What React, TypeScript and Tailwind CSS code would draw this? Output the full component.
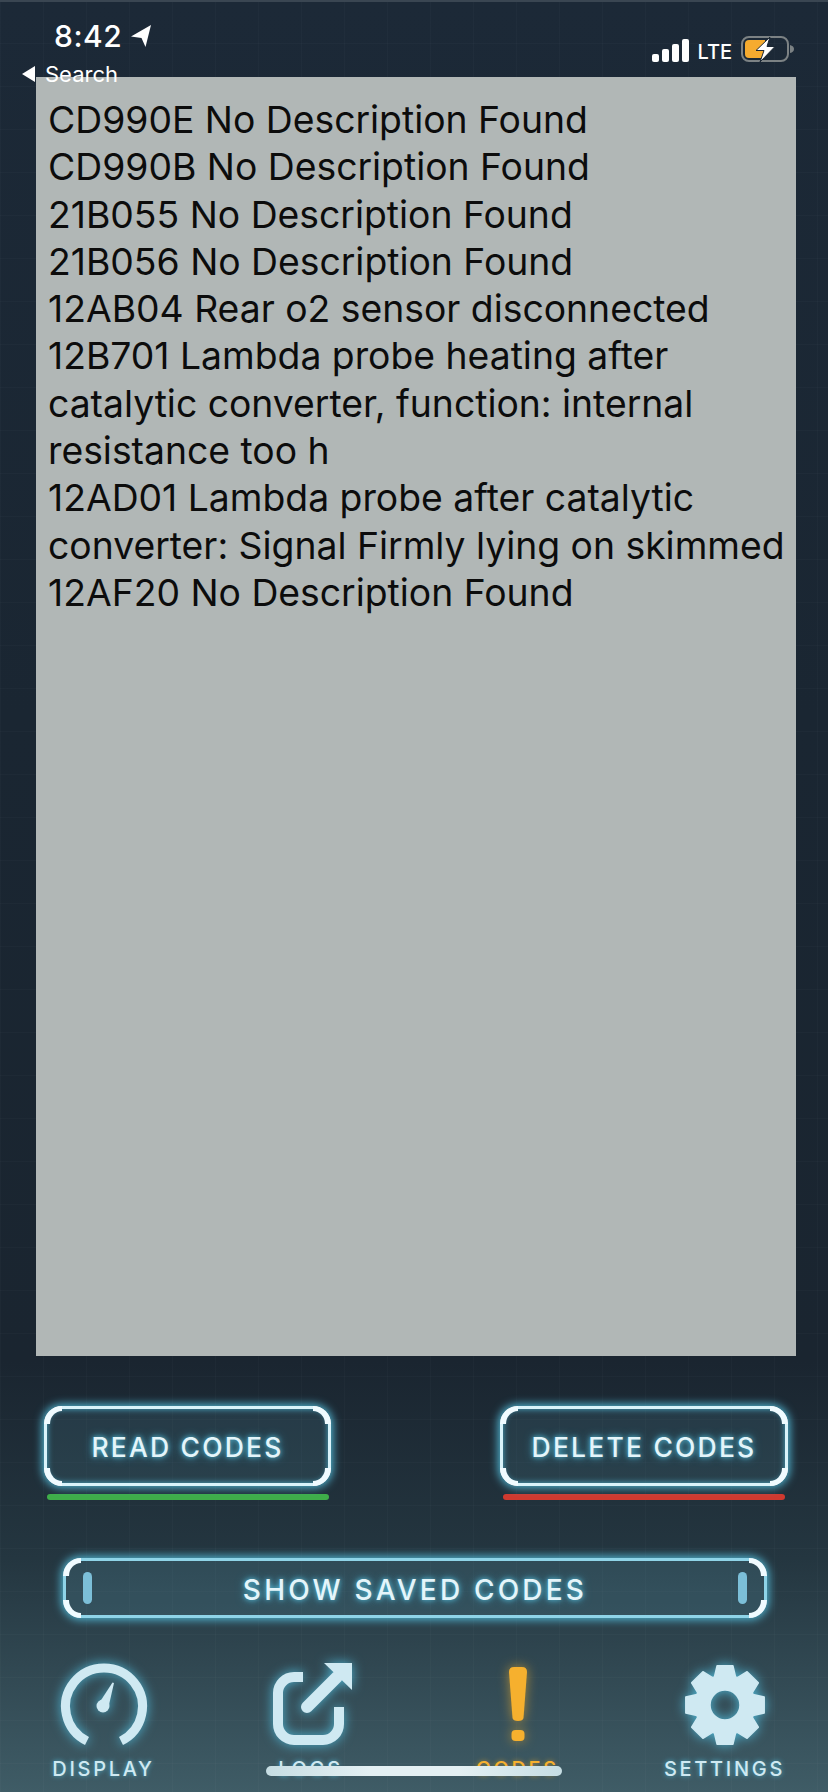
import React from 'react'

const lines = [
  'CD990E No Description Found',
  'CD990B No Description Found',
  '21B055 No Description Found',
  '21B056 No Description Found',
  '12AB04 Rear o2 sensor disconnected',
  '12B701 Lambda probe heating after',
  'catalytic converter, function: internal',
  'resistance too h',
  '12AD01 Lambda probe after catalytic',
  'converter: Signal Firmly lying on skimmed',
  '12AF20 No Description Found',
]

const glowText = 'text-[#e4f5fa] [text-shadow:0_0_5px_#58bcd8,0_0_10px_#3d9bb8]'
const corner = 'absolute w-[18px] h-[18px] border-[#f0fbff]'

function Corners() {
  return (
    <>
      <div className={`${corner} -top-[3px] -left-[3px] border-t-[5px] border-l-[6px] rounded-tl-[18px]`}></div>
      <div className={`${corner} -top-[3px] -right-[3px] border-t-[5px] border-r-[6px] rounded-tr-[18px]`}></div>
      <div className={`${corner} -bottom-[3px] -left-[3px] border-b-[5px] border-l-[6px] rounded-bl-[18px]`}></div>
      <div className={`${corner} -bottom-[3px] -right-[3px] border-b-[5px] border-r-[6px] rounded-br-[18px]`}></div>
    </>
  )
}

function ActionButton({ label, line, width }: { label: string; line: string; width: string }) {
  return (
    <div className={`flex flex-col items-center ${width}`}>
      <div className="relative w-full h-[80px] rounded-[18px] border-[3px] border-[#d9f3fa] bg-[#5f9fb4]/15 shadow-[0_0_8px_2px_#4fb0cc,inset_0_0_6px_#4fb0cc] flex items-center justify-center">
        <Corners />
        <span className={`pt-[4px] text-[26.5px] font-medium tracking-[2.2px] ${glowText}`}>{label}</span>
      </div>
      <div className={`mt-[8px] h-[6px] w-[282px] rounded-full ${line}`}></div>
    </div>
  )
}

function gearPath() {
  const cx = 50
  const cy = 50
  const outer = 40
  const body = 30
  const hole = 15
  const pt = (r: number, a: number) => `${(cx + r * Math.cos(a)).toFixed(2)} ${(cy + r * Math.sin(a)).toFixed(2)}`
  let d = ''
  for (let i = 0; i < 8; i++) {
    const a = (i * Math.PI) / 4 - Math.PI / 2
    d += `${i === 0 ? 'M' : 'L'}${pt(body, a - 0.36)} L${pt(outer, a - 0.2)} L${pt(outer, a + 0.2)} L${pt(body, a + 0.36)} `
  }
  d += `Z M${cx - hole} ${cy} a${hole} ${hole} 0 1 0 ${hole * 2} 0 a${hole} ${hole} 0 1 0 ${-hole * 2} 0 Z`
  return d
}

const iconGlow = 'drop-shadow-[0_0_6px_#4fb4d2]'

function DisplayIcon() {
  return (
    <svg width="100" height="100" viewBox="0 0 100 100" className={iconGlow}>
      <path d="M33 86 A38.5 38.5 0 1 1 67 86" fill="none" stroke="#cfe9f2" strokeWidth="9" />
      <circle cx="49" cy="51" r="6.5" fill="#cfe9f2" />
      <path d="M44.5 49 L58.5 27.5 L60 28 L54.5 52 Z" fill="#cfe9f2" />
    </svg>
  )
}

function LogsIcon() {
  return (
    <svg width="100" height="100" viewBox="0 0 100 100" className={iconGlow}>
      <path
        d="M42 22 H33 A16 16 0 0 0 17 38 V69 A16 16 0 0 0 33 85 H62 A16 16 0 0 0 78 69 V52"
        fill="none"
        stroke="#cfe9f2"
        strokeWidth="10"
      />
      <path d="M46 52 L76 22" fill="none" stroke="#cfe9f2" strokeWidth="12" strokeLinecap="round" />
      <path d="M63 8 L91 8 L91 35 Z" fill="#cfe9f2" />
    </svg>
  )
}

function CodesIcon() {
  return (
    <svg width="100" height="100" viewBox="0 0 100 100" className="drop-shadow-[0_0_6px_#a98a3c]">
      <path d="M41 17 Q41 12 46 12 H54 Q59 12 59 17 L55.5 63 Q55 66 50 66 Q45 66 44.5 63 Z" fill="#f6b02e" />
      <rect x="43.5" y="75" width="13" height="11" rx="4" fill="#f6b02e" />
    </svg>
  )
}

function SettingsIcon() {
  return (
    <svg width="100" height="100" viewBox="0 0 100 100" className={iconGlow}>
      <path d={gearPath()} fill="#cfe9f2" fillRule="evenodd" stroke="#cfe9f2" strokeWidth="1.5" strokeLinejoin="round" />
    </svg>
  )
}

function Tab({ label, icon, active }: { label: string; icon: React.ReactNode; active?: boolean }) {
  return (
    <div className="flex flex-col items-center">
      <div className="h-[100px] -mt-[5px]">{icon}</div>
      <span
        className={`mt-[2px] text-[20px] leading-[24px] font-medium tracking-[2.7px] ${
          active ? 'text-[#f6b02e] [text-shadow:0_0_5px_#a98a3c]' : 'text-[#cfe9f2] [text-shadow:0_0_5px_#4fb4d2]'
        }`}
      >
        {label}
      </span>
    </div>
  )
}

export default function App() {
  return (
    <div className="relative w-[828px] h-[1792px] overflow-hidden flex flex-col font-['Inter',sans-serif] bg-[linear-gradient(to_bottom,#1c2937_0%,#1a2632_40%,#1a2530_76%,#243640_87%,#3f5c66_100%)]">
      {/* faint blueprint grid */}
      <div className="absolute inset-0 bg-[linear-gradient(to_right,rgba(255,255,255,0.02)_1px,transparent_1px),linear-gradient(to_bottom,rgba(255,255,255,0.02)_1px,transparent_1px)] bg-[size:43px_43px]"></div>
      <div className="absolute inset-x-0 top-0 h-[2px] bg-[#3a4652]"></div>

      {/* Status bar */}
      <header className="relative z-10 h-[77px] shrink-0 flex justify-between">
        <div className="pl-[22px] pt-[20px] text-white">
          <div className="flex items-center pl-[32px] h-[32px]">
            <span className="text-[30px] leading-[32px] font-medium tracking-[0.5px]">8:42</span>
            <svg width="20" height="22" viewBox="0 0 20 22" className="ml-[9px]">
              <path d="M0 11.5 L20 0 L14.5 22 L10.5 13 Z" fill="#ffffff" />
            </svg>
          </div>
          <div className="flex items-center h-[28px] mt-[8px]">
            <svg width="14" height="16" viewBox="0 0 14 16">
              <path d="M0 8 L13 0 V16 Z" fill="#ffffff" />
            </svg>
            <span className="ml-[9px] text-[22px] leading-[28px]">Search</span>
          </div>
        </div>
        <div className="flex items-end pr-[34px] pb-[15px] text-white">
          <div className="flex items-end gap-[3px] h-[23px]">
            <div className="w-[7px] h-[8px] bg-white rounded-[2px]"></div>
            <div className="w-[7px] h-[13px] bg-white rounded-[2px]"></div>
            <div className="w-[7px] h-[18px] bg-white rounded-[2px]"></div>
            <div className="w-[7px] h-[23px] bg-white rounded-[2px]"></div>
          </div>
          <span className="ml-[8px] text-[20px] leading-[20px] font-medium">LTE</span>
          <svg width="53" height="26" viewBox="0 0 53 26" className="ml-[9px]">
            <rect x="1" y="1" width="46" height="24" rx="7" fill="none" stroke="#7c8284" strokeWidth="2" />
            <path d="M8 4 H24 V22 H8 Q4 22 4 18 V8 Q4 4 8 4 Z" fill="#f6ab2f" />
            <path d="M49 9 Q53 10 53 13 Q53 16 49 17 Z" fill="#7c8284" />
            <path d="M29 1 L15 14.5 H23 L19 26 L34 10.5 H26 Z" fill="#ffffff" stroke="#1b2733" strokeWidth="1" />
          </svg>
        </div>
      </header>

      {/* Codes list */}
      <main className="relative ml-[36px] w-[760px] h-[1279px] shrink-0 bg-[#b1b7b6] pl-[12px] pt-[19px] text-[37.3px] leading-[47.3px] text-[#0c0c0c]">
        {lines.map((l) => (
          <div key={l} className="whitespace-nowrap">
            {l}
          </div>
        ))}
      </main>

      {/* Read and delete */}
      <div className="relative mt-[50px] pl-[44px] pr-[40px] flex justify-between">
        <ActionButton label="READ CODES" line="bg-[#3fae49]" width="w-[287px]" />
        <ActionButton label="DELETE CODES" line="bg-[#d0392f]" width="w-[288px]" />
      </div>

      {/* Saved codes */}
      <div className="relative mt-[58px] ml-[63px] w-[704px] h-[60px] rounded-[18px] border-[3px] border-[#8fd4e8] bg-[#5f9fb4]/20 shadow-[0_0_8px_2px_#4fb0cc] flex items-center justify-between px-[17px]">
        <Corners />
        <div className="w-[9px] h-[32px] rounded-full bg-[#7cbfd8]"></div>
        <span className={`pt-[4px] text-[28px] font-medium tracking-[3.2px] ${glowText}`}>SHOW SAVED CODES</span>
        <div className="w-[9px] h-[32px] rounded-full bg-[#7cbfd8]"></div>
      </div>

      {/* Tab bar */}
      <nav className="relative mt-[42px] grid grid-cols-4">
        <Tab label="DISPLAY" icon={<DisplayIcon />} />
        <Tab label="LOGS" icon={<LogsIcon />} />
        <Tab label="CODES" icon={<CodesIcon />} active />
        <Tab label="SETTINGS" icon={<SettingsIcon />} />
      </nav>

      {/* Home indicator */}
      <div className="absolute left-[266px] top-[1766px] w-[296px] h-[10px] rounded-full bg-[linear-gradient(to_right,#c6dde3,#e4f0f3_35%,#e4f0f3_65%,#c6dde3)]"></div>
    </div>
  )
}
